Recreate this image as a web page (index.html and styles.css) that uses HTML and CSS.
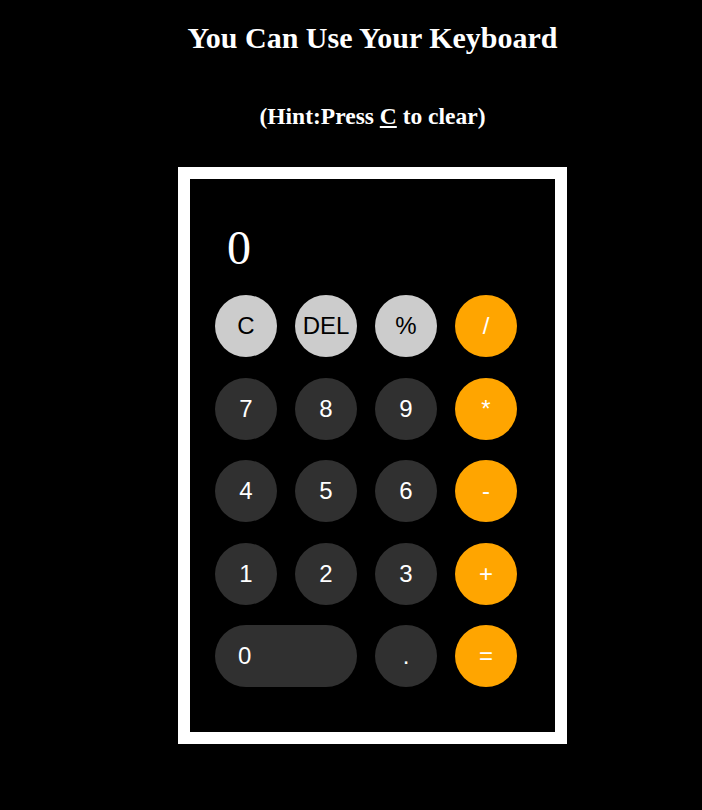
FILE: index.html
```html
<!DOCTYPE html>
<html lang="en">
<head>
<meta charset="utf-8">
<title>Calculator</title>
<link rel="stylesheet" href="styles.css">
</head>
<body>
<main class="page">
  <h1 class="title">You Can Use Your Keyboard</h1>
  <h3 class="hint">(Hint:Press <u>C</u> to clear)</h3>
  <div class="calc">
    <div class="display">0</div>
    <div class="keys">
      <button class="key light">C</button>
      <button class="key light">DEL</button>
      <button class="key light">%</button>
      <button class="key op">/</button>
      <button class="key">7</button>
      <button class="key">8</button>
      <button class="key">9</button>
      <button class="key op">*</button>
      <button class="key">4</button>
      <button class="key">5</button>
      <button class="key">6</button>
      <button class="key op">-</button>
      <button class="key">1</button>
      <button class="key">2</button>
      <button class="key">3</button>
      <button class="key op">+</button>
      <button class="key zero">0</button>
      <button class="key">.</button>
      <button class="key op">=</button>
    </div>
  </div>
</main>
</body>
</html>
```
FILE: styles.css
```css
html, body {
  margin: 0;
  padding: 0;
  background: #000;
}
.page {
  padding-left: 43px;
  display: flex;
  flex-direction: column;
  align-items: center;
  color: #fff;
  font-family: "Liberation Serif", "Times New Roman", serif;
}
.title {
  font-size: 30px;
  font-weight: bold;
  margin: 22px 0 0;
  line-height: 32px;
}
.hint {
  font-size: 23.5px;
  font-weight: bold;
  margin: 50px 0 0;
  line-height: 25px;
}
.hint u {
  text-underline-offset: 2px;
}
.calc {
  margin-top: 38px;
  border: 12px solid #fff;
  width: 302px;
  padding: 41px 38px 45px 25px;
  background: #000;
}
.display {
  height: 55px;
  line-height: 55px;
  font-size: 48px;
  padding-left: 12px;
  margin-bottom: 20px;
  color: #fff;
}
.keys {
  display: grid;
  grid-template-columns: repeat(4, 62px);
  grid-auto-rows: 62px;
  column-gap: 18px;
  row-gap: 20.5px;
}
.key {
  border: none;
  margin: 0;
  padding: 0;
  border-radius: 50%;
  background: #303030;
  color: #fff;
  font-family: "Liberation Sans", Arial, sans-serif;
  font-size: 24px;
  text-align: center;
}
.key.light {
  background: #ccc;
  color: #000;
}
.key.op {
  background: #ffa500;
  color: #fff;
}
.key.zero {
  grid-column: span 2;
  border-radius: 31px;
  text-align: left;
  padding-left: 23px;
}
```
